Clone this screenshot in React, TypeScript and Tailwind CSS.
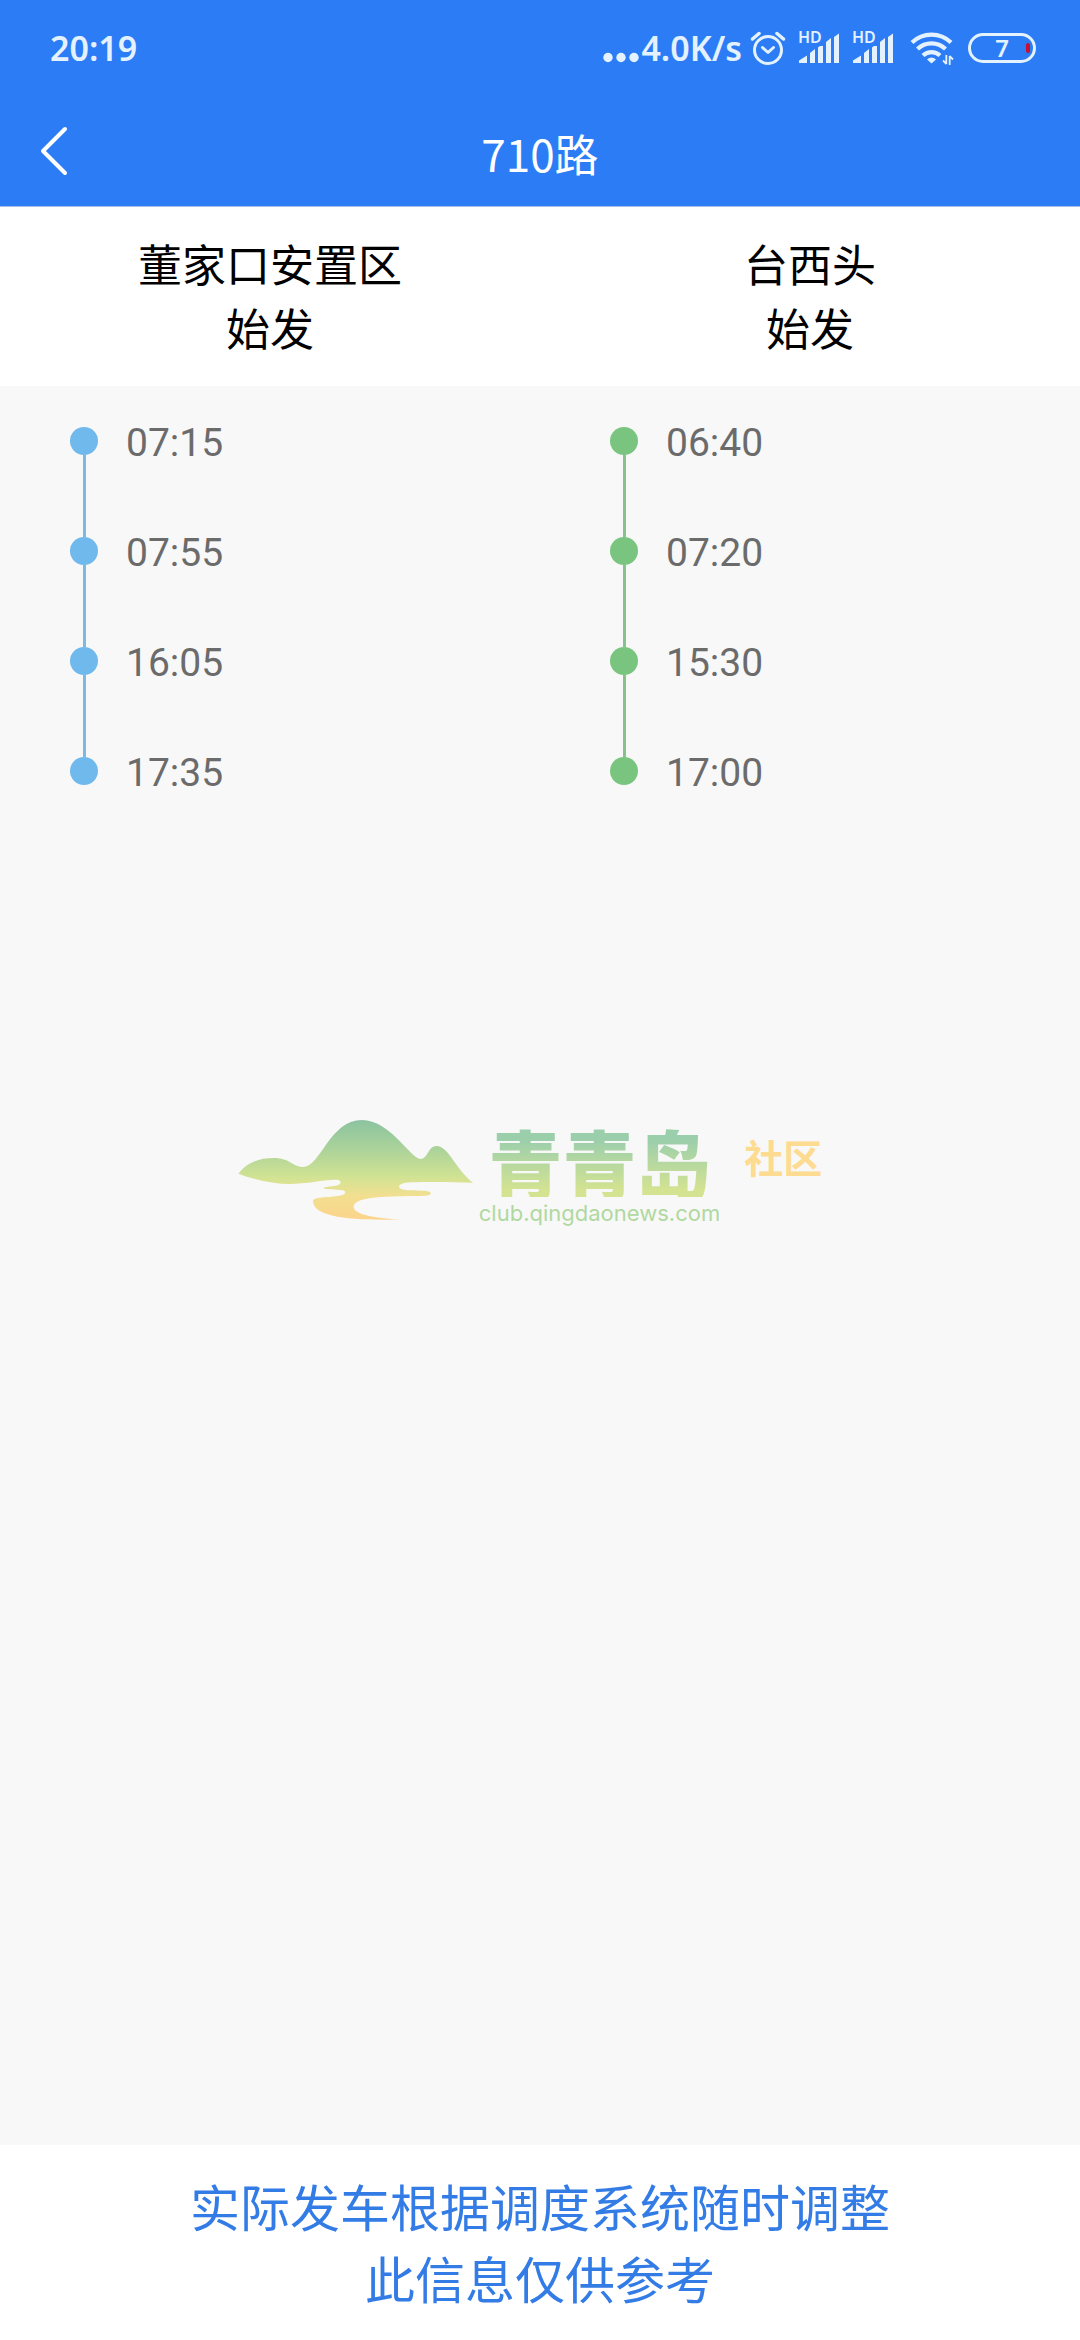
const CJK = "font-['Noto_Sans_CJK_SC',sans-serif]";

const directions = [
  {
    id: "outbound",
    origin: "董家口安置区",
    times: ["07:15", "07:55", "16:05", "17:35"],
    dot: "bg-[#6fb9ec]",
    line: "bg-[#7cbbe0]",
  },
  {
    id: "inbound",
    origin: "台西头",
    times: ["06:40", "07:20", "15:30", "17:00"],
    dot: "bg-[#79c57f]",
    line: "bg-[#84c48a]",
  },
];

function AlarmIcon() {
  return (
    <svg viewBox="0 0 36 36" className="size-9" fill="none" stroke="currentColor" strokeWidth="3" strokeLinecap="round" strokeLinejoin="round" aria-hidden="true">
      <circle cx="18" cy="20" r="13.5" />
      <path d="M12.5 17.5 18 22.5 23.5 17.5" />
      <path d="M2.500 9 9 3.500M33.500 9 27 3.500" strokeWidth="3.500" />
    </svg>
  );
}

function SignalIcon() {
  return (
    <span className="relative block">
      <svg viewBox="0 0 42 32" className="h-8 w-[42px]" fill="currentColor" aria-hidden="true">
        <path d="M1 31v-2.500l8-5V31zM12 31V21l5-4v14zM20 31V15.500l5-4V31zM28 31V10l5-4v25zM36 31V5l5-3.500V31z" />
      </svg>
      <span className="absolute left-0 top-0 -mt-1 bg-[#2c7cf6] pr-px font-['Noto_Sans',sans-serif] text-base font-semibold leading-[18px]">
        HD
      </span>
    </span>
  );
}

function WifiIcon() {
  return (
    <svg viewBox="0 0 44 36" className="h-9 w-11" fill="none" stroke="currentColor" strokeWidth="4.200" aria-hidden="true">
      <path d="M2 12.500a28 28 0 0 1 39 0" />
      <path d="M7.500 19a20 20 0 0 1 28 0" />
      <path d="M13 25.500a12.500 12.500 0 0 1 17 0" />
      <path d="M21.500 33.500l-4.500-4q4.500-4 9 0z" fill="currentColor" stroke="none" />
      <path d="M36.300 25v9M39.700 35v-9M33 30.500l3.500 3.500M43 29.500l-3.500-3.500" strokeWidth="1.800" />
    </svg>
  );
}

function StatusBar() {
  return (
    <div className="flex h-24 items-center justify-between pl-[50px] pr-11 font-['Noto_Sans',sans-serif] font-semibold text-[#e4f2ff]">
      <time className="text-[34px] leading-10">20:19</time>
      <div className="flex items-center gap-2">
        <div className="flex items-center">
          <svg viewBox="0 0 38 32" className="h-8 w-[38px]" fill="currentColor" aria-hidden="true">
            <circle cx="5" cy="25.500" r="4.700" />
            <circle cx="18" cy="25.500" r="4.700" />
            <circle cx="31" cy="25.500" r="4.700" />
          </svg>
          <span className="text-[34px] leading-10">4.0K/s</span>
        </div>
        <AlarmIcon />
        <div className="flex gap-3 pl-1">
          <SignalIcon />
          <SignalIcon />
        </div>
        <div className="flex items-center gap-3.5 pl-2">
          <WifiIcon />
          <div className="relative flex h-[30px] w-[68px] items-center justify-center rounded-full border-[3px] border-current text-2xl">
            7
            <span className="absolute right-[3px] h-2.5 w-1 rounded-full bg-[#c8102e]" />
          </div>
        </div>
      </div>
    </div>
  );
}

function TitleBar() {
  return (
    <div className="grid h-[110px] grid-cols-[1fr_auto_1fr] items-center text-white">
      <button type="button" aria-label="返回" className="w-fit py-6 pl-9 pr-6">
        <svg viewBox="0 0 36 56" className="h-14 w-9" fill="none" stroke="currentColor" strokeWidth="4" strokeLinecap="round" strokeLinejoin="round" aria-hidden="true">
          <path d="M29 6 7 28l22 22" />
        </svg>
      </button>
      <h1 className="pt-1 text-[44px] leading-[64px]">710路</h1>
    </div>
  );
}

function Timeline({ times, dot, line }: { times: string[]; dot: string; line: string }) {
  return (
    <ol className="flex-1">
      {times.map((time, i) => (
        <li key={time} className="flex h-[110px] items-start gap-7 pl-[70px]">
          <div className="flex h-full flex-col items-center">
            <span className={`size-7 shrink-0 rounded-full ${dot}`} />
            {i < times.length - 1 && <span className={`w-[3px] flex-1 ${line}`} />}
          </div>
          <time className="font-['Roboto',sans-serif] text-[39px] leading-8 text-[#6b6b6b]">{time}</time>
        </li>
      ))}
    </ol>
  );
}

function Watermark() {
  return (
    <div className="pointer-events-none absolute inset-0 flex items-center justify-center pr-5">
      <svg viewBox="50 60 705 300" className="h-[100px] w-[235px]" aria-hidden="true">
        <defs>
          <linearGradient id="hill" x1="0" y1="0" x2="0" y2="1">
            <stop offset="0" stopColor="#8bc3a0" />
            <stop offset="0.3" stopColor="#acd399" />
            <stop offset="0.58" stopColor="#d2e393" />
            <stop offset="0.76" stopColor="#f2df90" />
            <stop offset="1" stopColor="#fcd48c" />
          </linearGradient>
        </defs>
        <path
          fill="url(#hill)"
          d="M51 221C75 188 112 174 158 174C205 174 215 201 245 201C298 201 325 60 422 60C505 60 570 177 597 177C620 177 620 138 645 138C682 138 700 205 755 248C690 246 620 245 570 247C520 249 525 270 560 271C605 272 628 272 628 280C628 287 615 288 590 288C510 289 397 288 397 320C397 345 470 355 540 359C430 360 275 360 275 303C275 285 372 297 372 276C372 266 308 271 308 264C308 258 358 262 358 247C358 227 270 252 205 252C155 252 95 238 51 221Z"
        />
      </svg>
      <div className="ml-1.5 flex flex-col items-center pt-3">
        <span className="bg-linear-to-b from-[#9bceab] from-20% to-[#d3e391] to-90% bg-clip-text text-[74px] font-black leading-[72px] text-transparent">
          青青岛
        </span>
        <span className="pt-0.5 font-['Inter',sans-serif] text-[22px] leading-7 text-[#b0d8a0]">club.qingdaonews.com</span>
      </div>
      <span className="mb-7 ml-6 text-[39px] font-bold leading-10 text-[#fddb90]">社区</span>
    </div>
  );
}

export default function App() {
  return (
    <div className={`relative flex min-h-screen flex-col bg-[#f8f8f8] ${CJK}`}>
      <header className="border-b border-[#a9bfec] bg-[#2c7cf6]">
        <StatusBar />
        <TitleBar />
      </header>

      {/* Origin stop of each direction */}
      <div className="flex bg-white pb-[27px] pt-6 text-center text-[44px] leading-[64px] text-black">
        {directions.map((d) => (
          <h2 key={d.id} className="flex-1">
            {d.origin}
            <br />
            始发
          </h2>
        ))}
      </div>

      <main className="flex flex-1 pt-[41px]">
        {directions.map((d) => (
          <Timeline key={d.id} times={d.times} dot={d.dot} line={d.line} />
        ))}
      </main>

      <Watermark />

      <footer className="bg-white pb-[27px] pt-6 text-center text-[50px] leading-[72px] text-[#337ce6]">
        <p>实际发车根据调度系统随时调整</p>
        <p>此信息仅供参考</p>
      </footer>
    </div>
  );
}
